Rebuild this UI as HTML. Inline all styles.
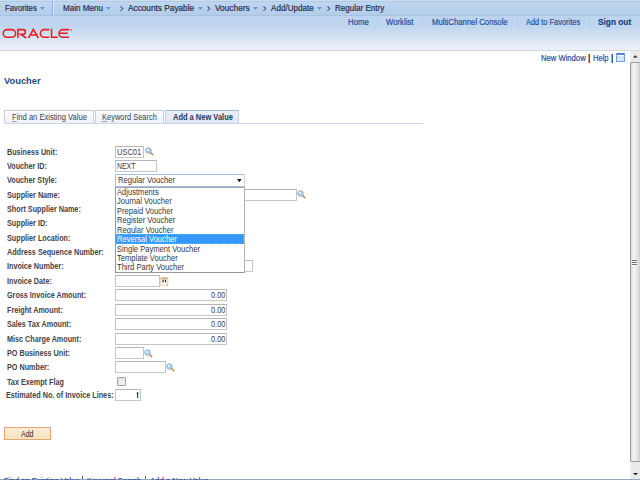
<!DOCTYPE html>
<html><head><meta charset="utf-8"><style>
html,body{margin:0;padding:0;}
body{width:640px;height:480px;overflow:hidden;position:relative;background:#fff;font-family:"Liberation Sans",sans-serif;}
.t{position:absolute;white-space:nowrap;}
.b{position:absolute;}
.tab{box-sizing:border-box;border:1px solid #c5cfdc;border-bottom:none;background:linear-gradient(#fdfdfd,#eef1f5);}
.tab.sel{border-color:#c4d2e4;border-top-color:#a6b6cc;background:linear-gradient(#eaf0f8,#dde6f2);}
u{text-decoration:underline;text-decoration-color:#9aa0b0;text-underline-offset:0.5px;}
</style></head><body>
<div class="b" style="left:0px;top:0px;width:640px;height:1px;background:#cddcec;"></div>
<div class="b" style="left:0px;top:1px;width:640px;height:1px;background:#b2cae6;"></div>
<div class="b" style="left:0px;top:2px;width:640px;height:13px;background:linear-gradient(#bed7f0,#b9d2ee 40%,#b3cce8);"></div>
<div class="b" style="left:0px;top:15px;width:640px;height:1px;background:#a9c2e0;"></div>
<div class="b" style="left:0px;top:16px;width:640px;height:34px;background:linear-gradient(#bdd4ee 0px,#c0d6ef 11px,#cadcf0 16px,#d6e4f4 22px,#e2ebf6 28px,#edf2f9 34px);"></div>
<div class="b" style="left:0px;top:50px;width:640px;height:1px;background:#d4d9e0;"></div>
<div class="b" style="left:52px;top:1px;width:1px;height:15px;background:#8eb0dc;"></div>
<div class="b" style="left:53px;top:1px;width:1px;height:15px;background:#dfe9f5;"></div>
<div class="t" style="left:4.90px;top:5px;font-size:8.2px;line-height:8.2px;color:#232c48;-webkit-text-stroke:0.18px currentColor;transform:scaleX(0.9441);transform-origin:0 0;">Favorites</div>
<svg class="b" style="left:39.7px;top:7px" width="6" height="4"><path d="M0 0H4.8L2.4 3Z" fill="#7094c8"/></svg>
<div class="t" style="left:63.40px;top:5px;font-size:8.2px;line-height:8.2px;color:#232c48;-webkit-text-stroke:0.18px currentColor;transform:scaleX(0.9900);transform-origin:0 0;">Main Menu</div>
<svg class="b" style="left:105.7px;top:7px" width="6" height="4"><path d="M0 0H4.8L2.4 3Z" fill="#7094c8"/></svg>
<svg class="b" style="left:120px;top:5.8px" width="4" height="6"><path d="M0.5 0.3L2.8 2.6L0.5 4.9" fill="none" stroke="#4a5c8a" stroke-width="1.05"/></svg>
<div class="t" style="left:127.50px;top:5px;font-size:8.2px;line-height:8.2px;color:#232c48;-webkit-text-stroke:0.18px currentColor;transform:scaleX(1.0092);transform-origin:0 0;">Accounts Payable</div>
<svg class="b" style="left:197.8px;top:7px" width="6" height="4"><path d="M0 0H4.8L2.4 3Z" fill="#7094c8"/></svg>
<svg class="b" style="left:206.8px;top:5.8px" width="4" height="6"><path d="M0.5 0.3L2.8 2.6L0.5 4.9" fill="none" stroke="#4a5c8a" stroke-width="1.05"/></svg>
<div class="t" style="left:214.70px;top:5px;font-size:8.2px;line-height:8.2px;color:#232c48;-webkit-text-stroke:0.18px currentColor;transform:scaleX(1.0162);transform-origin:0 0;">Vouchers</div>
<svg class="b" style="left:253px;top:7px" width="6" height="4"><path d="M0 0H4.8L2.4 3Z" fill="#7094c8"/></svg>
<svg class="b" style="left:263px;top:5.8px" width="4" height="6"><path d="M0.5 0.3L2.8 2.6L0.5 4.9" fill="none" stroke="#4a5c8a" stroke-width="1.05"/></svg>
<div class="t" style="left:270.50px;top:5px;font-size:8.2px;line-height:8.2px;color:#232c48;-webkit-text-stroke:0.18px currentColor;transform:scaleX(0.9884);transform-origin:0 0;">Add/Update</div>
<svg class="b" style="left:317px;top:7px" width="6" height="4"><path d="M0 0H4.8L2.4 3Z" fill="#7094c8"/></svg>
<svg class="b" style="left:326.8px;top:5.8px" width="4" height="6"><path d="M0.5 0.3L2.8 2.6L0.5 4.9" fill="none" stroke="#4a5c8a" stroke-width="1.05"/></svg>
<div class="t" style="left:334.50px;top:5px;font-size:8.2px;line-height:8.2px;color:#232c48;-webkit-text-stroke:0.18px currentColor;transform:scaleX(0.9850);transform-origin:0 0;">Regular Entry</div>
<div class="t" style="left:347.50px;top:18px;font-size:8.3px;line-height:8.3px;color:#1f4c9e;-webkit-text-stroke:0.18px currentColor;transform:scaleX(0.9432);transform-origin:0 0;">Home</div>
<div class="b" style="left:377px;top:18px;width:1px;height:8px;background:#b5c9e2;"></div>
<div class="t" style="left:386.25px;top:18px;font-size:8.3px;line-height:8.3px;color:#1f4c9e;-webkit-text-stroke:0.18px currentColor;transform:scaleX(0.9333);transform-origin:0 0;">Worklist</div>
<div class="b" style="left:422px;top:18px;width:1px;height:8px;background:#b5c9e2;"></div>
<div class="t" style="left:432.00px;top:18px;font-size:8.3px;line-height:8.3px;color:#1f4c9e;-webkit-text-stroke:0.18px currentColor;transform:scaleX(0.9321);transform-origin:0 0;">MultiChannel Console</div>
<div class="b" style="left:517px;top:18px;width:1px;height:8px;background:#b5c9e2;"></div>
<div class="t" style="left:525.75px;top:18px;font-size:8.3px;line-height:8.3px;color:#1f4c9e;-webkit-text-stroke:0.18px currentColor;transform:scaleX(0.8958);transform-origin:0 0;">Add to Favorites</div>
<div class="b" style="left:589px;top:18px;width:1px;height:8px;background:#b5c9e2;"></div>
<div class="t" style="left:597.50px;top:18px;font-size:8.6px;line-height:8.6px;color:#1a3c80;font-weight:bold;transform:scaleX(0.9643);transform-origin:0 0;-webkit-text-stroke:0.15px currentColor;">Sign out</div>
<svg class="b" style="left:0;top:26px" width="76" height="14" viewBox="0 0 76 14">
<g fill="none" stroke="#ec1c24" stroke-width="1.55">
<rect x="3.2" y="3.6" width="12.4" height="7.6" rx="3.8"/>
<path d="M17.9 12V3.6H23.1A2.3 2.3 0 0 1 23.1 8.2H20.6L26.2 12"/>
<path d="M28.5 12L33.4 3.3L38.3 12M31.3 8.9H35.9"/>
<path d="M49.3 3.6H44.2A3.8 3.8 0 0 0 44.2 11.2H49.3"/>
<path d="M51.55 2.8V11.2H57.8"/>
<path d="M69 3.6H62.8A3.8 3.8 0 0 0 62.8 11.2H69M59.4 7.3H67.9"/>
</g>
<circle cx="71" cy="4.1" r="0.75" fill="#ec1c24"/>
</svg>
<div class="b" style="left:630px;top:51px;width:10px;height:428px;background:#eaeaea;"></div>
<div class="b" style="left:630px;top:51px;width:1px;height:428px;background:#f4f4f4;"></div>
<svg class="b" style="left:632.6px;top:55.2px" width="6" height="4"><path d="M0 2.6H4.6L2.3 0.2Z" fill="#222"/></svg>
<div class="b" style="left:630px;top:62px;width:10px;height:400px;box-sizing:border-box;border:1px solid #9c9c9c;border-right:none;border-radius:2px 0 0 2px;background:linear-gradient(90deg,#d8d8d8,#f6f6f6 30%,#e4e4e4 70%,#cfcfcf);"></div>
<div class="b" style="left:632px;top:260px;width:5px;height:1px;background:#707070;"></div>
<div class="b" style="left:632px;top:261px;width:5px;height:1px;background:#fafafa;"></div>
<div class="b" style="left:632px;top:262px;width:5px;height:1px;background:#707070;"></div>
<div class="b" style="left:632px;top:263px;width:5px;height:1px;background:#fafafa;"></div>
<div class="b" style="left:632px;top:264px;width:5px;height:1px;background:#707070;"></div>
<div class="b" style="left:632px;top:265px;width:5px;height:1px;background:#fafafa;"></div>
<svg class="b" style="left:632.8px;top:472.8px" width="6" height="3"><path d="M0 0H5L2.5 2.2Z" fill="#1a1a1a"/></svg>
<div class="b" style="left:0px;top:479px;width:640px;height:1px;background:#98a8bc;"></div>
<div class="t" style="left:540.60px;top:54px;font-size:8.3px;line-height:8.3px;color:#1f4c9e;-webkit-text-stroke:0.18px currentColor;transform:scaleX(0.9224);transform-origin:0 0;">New Window</div>
<div class="b" style="left:588px;top:54px;width:1px;height:9px;background:#d9a25a;"></div>
<div class="b" style="left:589px;top:54px;width:1px;height:9px;background:#3a58a0;"></div>
<div class="t" style="left:592.70px;top:54px;font-size:8.3px;line-height:8.3px;color:#1f4c9e;-webkit-text-stroke:0.18px currentColor;transform:scaleX(0.9118);transform-origin:0 0;">Help</div>
<div class="b" style="left:611px;top:54px;width:1px;height:9px;background:#d9a25a;"></div>
<div class="b" style="left:612px;top:54px;width:1px;height:9px;background:#3a58a0;"></div>
<div class="b" style="left:616px;top:53px;width:9px;height:9px;box-sizing:border-box;border:1px solid #6a9ee6;border-top-color:#4a80dc;background:linear-gradient(#c4d8f4,#dce8f8);"></div>
<div class="b" style="left:617px;top:54px;width:7px;height:1px;background:#5a8ee2;"></div>
<div class="b" style="left:617px;top:55px;width:7px;height:1px;background:#ffffff;"></div>
<div class="b" style="left:619px;top:56px;width:1px;height:5px;background:#e4eefb;"></div>
<div class="b" style="left:621px;top:56px;width:1px;height:5px;background:#e4eefb;"></div>
<div class="t" style="left:3.75px;top:76px;font-size:9.8px;line-height:9.8px;color:#2a4886;font-weight:bold;transform:scaleX(0.9500);transform-origin:0 0;">Voucher</div>
<div class="b" style="left:4px;top:123px;width:419px;height:1px;background:#c9d8ec;"></div>
<div class="b tab" style="left:4px;top:110px;width:90px;height:13px;"></div>
<div class="t" style="left:11.70px;top:113px;font-size:8.3px;line-height:8.3px;color:#3e4256;transform:scaleX(0.9146);transform-origin:0 0;"><u>F</u>ind an Existing Value</div>
<div class="b tab" style="left:95px;top:110px;width:69px;height:13px;"></div>
<div class="t" style="left:102.00px;top:113px;font-size:8.3px;line-height:8.3px;color:#3e4256;transform:scaleX(0.9016);transform-origin:0 0;"><u>K</u>eyword Search</div>
<div class="b tab sel" style="left:165px;top:110px;width:74px;height:13px;"></div>
<div class="t" style="left:172.50px;top:113px;font-size:8.3px;line-height:8.3px;color:#2a3a5c;font-weight:bold;transform:scaleX(0.9015);transform-origin:0 0;">Add a New Value</div>
<div class="t" style="left:6.60px;top:148px;font-size:8.3px;line-height:8.3px;color:#444448;font-weight:bold;transform:scaleX(0.8655);transform-origin:0 0;">Business Unit:</div>
<div class="t" style="left:6.60px;top:162px;font-size:8.3px;line-height:8.3px;color:#444448;font-weight:bold;transform:scaleX(0.8698);transform-origin:0 0;">Voucher ID:</div>
<div class="t" style="left:6.60px;top:176px;font-size:8.3px;line-height:8.3px;color:#444448;font-weight:bold;transform:scaleX(0.8698);transform-origin:0 0;">Voucher Style:</div>
<div class="t" style="left:6.60px;top:191px;font-size:8.3px;line-height:8.3px;color:#444448;font-weight:bold;transform:scaleX(0.8698);transform-origin:0 0;">Supplier Name:</div>
<div class="t" style="left:6.60px;top:205px;font-size:8.3px;line-height:8.3px;color:#444448;font-weight:bold;transform:scaleX(0.8698);transform-origin:0 0;">Short Supplier Name:</div>
<div class="t" style="left:6.60px;top:219px;font-size:8.3px;line-height:8.3px;color:#444448;font-weight:bold;transform:scaleX(0.8698);transform-origin:0 0;">Supplier ID:</div>
<div class="t" style="left:6.60px;top:234px;font-size:8.3px;line-height:8.3px;color:#444448;font-weight:bold;transform:scaleX(0.8698);transform-origin:0 0;">Supplier Location:</div>
<div class="t" style="left:6.60px;top:248px;font-size:8.3px;line-height:8.3px;color:#444448;font-weight:bold;transform:scaleX(0.8698);transform-origin:0 0;">Address Sequence Number:</div>
<div class="t" style="left:6.60px;top:262px;font-size:8.3px;line-height:8.3px;color:#444448;font-weight:bold;transform:scaleX(0.8698);transform-origin:0 0;">Invoice Number:</div>
<div class="t" style="left:6.60px;top:277px;font-size:8.3px;line-height:8.3px;color:#444448;font-weight:bold;transform:scaleX(0.8698);transform-origin:0 0;">Invoice Date:</div>
<div class="t" style="left:6.60px;top:291px;font-size:8.3px;line-height:8.3px;color:#444448;font-weight:bold;transform:scaleX(0.8698);transform-origin:0 0;">Gross Invoice Amount:</div>
<div class="t" style="left:6.60px;top:306px;font-size:8.3px;line-height:8.3px;color:#444448;font-weight:bold;transform:scaleX(0.8698);transform-origin:0 0;">Freight Amount:</div>
<div class="t" style="left:6.60px;top:320px;font-size:8.3px;line-height:8.3px;color:#444448;font-weight:bold;transform:scaleX(0.8698);transform-origin:0 0;">Sales Tax Amount:</div>
<div class="t" style="left:6.60px;top:335px;font-size:8.3px;line-height:8.3px;color:#444448;font-weight:bold;transform:scaleX(0.8698);transform-origin:0 0;">Misc Charge Amount:</div>
<div class="t" style="left:6.60px;top:349px;font-size:8.3px;line-height:8.3px;color:#444448;font-weight:bold;transform:scaleX(0.8698);transform-origin:0 0;">PO Business Unit:</div>
<div class="t" style="left:6.60px;top:363px;font-size:8.3px;line-height:8.3px;color:#444448;font-weight:bold;transform:scaleX(0.8698);transform-origin:0 0;">PO Number:</div>
<div class="t" style="left:6.60px;top:378px;font-size:8.3px;line-height:8.3px;color:#444448;font-weight:bold;transform:scaleX(0.8698);transform-origin:0 0;">Tax Exempt Flag</div>
<div class="t" style="left:6.25px;top:391px;font-size:8.3px;line-height:8.3px;color:#444448;font-weight:bold;transform:scaleX(0.8740);transform-origin:0 0;">Estimated No. of Invoice Lines:</div>
<div class="b" style="left:115px;top:145.5px;width:29px;height:12px;box-sizing:border-box;border:1px solid #c4c4c4;border-top-color:#b6b6b6;border-bottom-color:#c8c8c8;background:#fff;"></div>
<div class="t" style="left:116.60px;top:148px;font-size:8.3px;line-height:8.3px;color:#3c3c48;transform:scaleX(0.9037);transform-origin:0 0;">USC01</div>
<svg class="b" style="left:144.5px;top:146.5px" width="10" height="10" viewBox="0 0 10 10">
<path d="M5.4 5.4L7.8 7.8" stroke="#cc8844" stroke-width="1.5" stroke-linecap="round"/>
<circle cx="3.5" cy="3.5" r="2.8" fill="#a9d2f2" stroke="#8ca4bc" stroke-width="0.8"/>
<circle cx="2.9" cy="2.9" r="1.1" fill="#e8f5ff"/>
</svg>
<div class="b" style="left:115px;top:160px;width:42px;height:12px;box-sizing:border-box;border:1px solid #c4c4c4;border-top-color:#b6b6b6;border-bottom-color:#c8c8c8;background:#fff;"></div>
<div class="t" style="left:116.90px;top:162px;font-size:8.3px;line-height:8.3px;color:#3c3c48;transform:scaleX(0.8341);transform-origin:0 0;">NEXT</div>
<div class="b" style="left:115px;top:188.7px;width:182px;height:12px;box-sizing:border-box;border:1px solid #c4c4c4;border-top-color:#b6b6b6;border-bottom-color:#c8c8c8;background:#fff;"></div>
<svg class="b" style="left:297px;top:190px" width="10" height="10" viewBox="0 0 10 10">
<path d="M5.4 5.4L7.8 7.8" stroke="#cc8844" stroke-width="1.5" stroke-linecap="round"/>
<circle cx="3.5" cy="3.5" r="2.8" fill="#a9d2f2" stroke="#8ca4bc" stroke-width="0.8"/>
<circle cx="2.9" cy="2.9" r="1.1" fill="#e8f5ff"/>
</svg>
<div class="b" style="left:115px;top:260px;width:138px;height:11.5px;box-sizing:border-box;border:1px solid #c4c4c4;border-top-color:#b6b6b6;border-bottom-color:#c8c8c8;background:#fff;"></div>
<div class="b" style="left:115px;top:275px;width:45px;height:12px;box-sizing:border-box;border:1px solid #c4c4c4;border-top-color:#b6b6b6;border-bottom-color:#c8c8c8;background:#fff;"></div>
<svg class="b" style="left:160px;top:277px" width="9" height="9" viewBox="0 0 9 9">
<defs><linearGradient id="cg" x1="0" y1="0" x2="0" y2="1"><stop offset="0" stop-color="#f0d8b0"/><stop offset="0.45" stop-color="#f6ead6"/><stop offset="1" stop-color="#ffffff"/></linearGradient></defs>
<rect x="0.7" y="0.5" width="7.2" height="8.2" rx="0.8" fill="url(#cg)" stroke="#d9c3a3" stroke-width="0.7"/>
<path d="M1.5 1.3H7.2" stroke="#e4a860" stroke-width="1"/>
<path d="M3.1 2.8V5.2M5.5 2.8V5.2" stroke="#2e2838" stroke-width="1.1"/>
<path d="M6.3 8.6L7.9 7V8.6Z" fill="#b07850"/>
</svg>
<div class="b" style="left:115px;top:289.3px;width:112px;height:12px;box-sizing:border-box;border:1px solid #c4c4c4;border-top-color:#b6b6b6;border-bottom-color:#c8c8c8;background:#fff;"></div>
<div class="t" style="left:211.00px;top:291px;font-size:8.3px;line-height:8.3px;color:#3c3c48;transform:scaleX(0.8875);transform-origin:0 0;">0.00</div>
<div class="b" style="left:115px;top:303.9px;width:112px;height:12px;box-sizing:border-box;border:1px solid #c4c4c4;border-top-color:#b6b6b6;border-bottom-color:#c8c8c8;background:#fff;"></div>
<div class="t" style="left:211.00px;top:306px;font-size:8.3px;line-height:8.3px;color:#3c3c48;transform:scaleX(0.8875);transform-origin:0 0;">0.00</div>
<div class="b" style="left:115px;top:318.2px;width:112px;height:12px;box-sizing:border-box;border:1px solid #c4c4c4;border-top-color:#b6b6b6;border-bottom-color:#c8c8c8;background:#fff;"></div>
<div class="t" style="left:211.00px;top:320px;font-size:8.3px;line-height:8.3px;color:#3c3c48;transform:scaleX(0.8875);transform-origin:0 0;">0.00</div>
<div class="b" style="left:115px;top:332.6px;width:112px;height:12px;box-sizing:border-box;border:1px solid #c4c4c4;border-top-color:#b6b6b6;border-bottom-color:#c8c8c8;background:#fff;"></div>
<div class="t" style="left:211.00px;top:335px;font-size:8.3px;line-height:8.3px;color:#3c3c48;transform:scaleX(0.8875);transform-origin:0 0;">0.00</div>
<div class="b" style="left:115px;top:347px;width:29px;height:12px;box-sizing:border-box;border:1px solid #c4c4c4;border-top-color:#b6b6b6;border-bottom-color:#c8c8c8;background:#fff;"></div>
<svg class="b" style="left:144.3px;top:348.5px" width="10" height="10" viewBox="0 0 10 10">
<path d="M5.4 5.4L7.8 7.8" stroke="#cc8844" stroke-width="1.5" stroke-linecap="round"/>
<circle cx="3.5" cy="3.5" r="2.8" fill="#a9d2f2" stroke="#8ca4bc" stroke-width="0.8"/>
<circle cx="2.9" cy="2.9" r="1.1" fill="#e8f5ff"/>
</svg>
<div class="b" style="left:115px;top:361px;width:51px;height:12px;box-sizing:border-box;border:1px solid #c4c4c4;border-top-color:#b6b6b6;border-bottom-color:#c8c8c8;background:#fff;"></div>
<svg class="b" style="left:166px;top:362.5px" width="10" height="10" viewBox="0 0 10 10">
<path d="M5.4 5.4L7.8 7.8" stroke="#cc8844" stroke-width="1.5" stroke-linecap="round"/>
<circle cx="3.5" cy="3.5" r="2.8" fill="#a9d2f2" stroke="#8ca4bc" stroke-width="0.8"/>
<circle cx="2.9" cy="2.9" r="1.1" fill="#e8f5ff"/>
</svg>
<div class="b" style="left:117px;top:377.3px;width:9px;height:9px;box-sizing:border-box;border:1px solid #a2a2a2;border-radius:1px;background:linear-gradient(135deg,#dcdfe4,#f6f6f6);"></div>
<div class="b" style="left:115px;top:389.3px;width:26px;height:12px;box-sizing:border-box;border:1px solid #c4c4c4;border-top-color:#b6b6b6;border-bottom-color:#c8c8c8;background:#fff;"></div>
<div class="b" style="left:137px;top:392px;width:1px;height:6px;background:#4a3c48;"></div>
<div class="b" style="left:136px;top:393px;width:1px;height:1px;background:#d8b8a0;"></div>
<div class="b" style="left:138px;top:392px;width:0.5px;height:6px;background:#b8e0f8;"></div>
<div class="b" style="left:115px;top:174px;width:130px;height:13px;box-sizing:border-box;border:1px solid #a4c0e6;border-right-color:#c4d8f0;background:#fff;"></div>
<div class="t" style="left:118.30px;top:176px;font-size:8.3px;line-height:8.3px;color:#363640;transform:scaleX(0.9242);transform-origin:0 0;">Regular Voucher</div>
<svg class="b" style="left:236.8px;top:178.8px" width="5" height="4"><path d="M0 0H4.6L2.3 3.2Z" fill="#1a1010"/></svg>
<div class="b" style="left:115px;top:187px;width:130px;height:86px;box-sizing:border-box;border:1px solid #94989e;border-top-color:#a4a8ae;border-right-color:#b4b8be;background:#fff;"></div>
<div class="t" style="left:117.10px;top:188px;font-size:8.3px;line-height:8.3px;color:#363640;transform:scaleX(0.9137);transform-origin:0 0;">Adjustments</div>
<div class="t" style="left:117.10px;top:197px;font-size:8.3px;line-height:8.3px;color:#363640;transform:scaleX(0.9137);transform-origin:0 0;">Journal Voucher</div>
<div class="t" style="left:117.10px;top:207px;font-size:8.3px;line-height:8.3px;color:#363640;transform:scaleX(0.9137);transform-origin:0 0;">Prepaid Voucher</div>
<div class="t" style="left:117.10px;top:216px;font-size:8.3px;line-height:8.3px;color:#363640;transform:scaleX(0.9137);transform-origin:0 0;">Register Voucher</div>
<div class="t" style="left:117.10px;top:226px;font-size:8.3px;line-height:8.3px;color:#363640;transform:scaleX(0.9137);transform-origin:0 0;">Regular Voucher</div>
<div class="b" style="left:116px;top:234px;width:128px;height:10px;box-sizing:border-box;background:#3399ff;border:1px dotted #b8a088;border-left-color:#3399ff;"></div>
<div class="t" style="left:117.10px;top:235px;font-size:8.3px;line-height:8.3px;color:#ffffff;transform:scaleX(0.9137);transform-origin:0 0;">Reversal Voucher</div>
<div class="t" style="left:117.10px;top:245px;font-size:8.3px;line-height:8.3px;color:#363640;transform:scaleX(0.9137);transform-origin:0 0;">Single Payment Voucher</div>
<div class="t" style="left:117.10px;top:254px;font-size:8.3px;line-height:8.3px;color:#363640;transform:scaleX(0.9137);transform-origin:0 0;">Template Voucher</div>
<div class="t" style="left:117.10px;top:263px;font-size:8.3px;line-height:8.3px;color:#363640;transform:scaleX(0.9137);transform-origin:0 0;">Third Party Voucher</div>
<div class="b" style="left:4.2px;top:427px;width:46.4px;height:12.7px;box-sizing:border-box;border:1px solid #e2a878;background:linear-gradient(#fcecd6,#f8e2bf);"></div>
<div class="t" style="left:21.10px;top:430px;font-size:8.3px;line-height:8.3px;color:#262626;transform:scaleX(0.8400);transform-origin:0 0;">Add</div>
<div class="t" style="left:3.90px;top:477px;font-size:8.3px;line-height:8.3px;color:#1f4c9e;-webkit-text-stroke:0.18px currentColor;transform:scaleX(0.9244);transform-origin:0 0;">Find an Existing Value</div>
<div class="b" style="left:82px;top:476px;width:1px;height:3px;background:#6a5a50;"></div>
<div class="t" style="left:86.90px;top:477px;font-size:8.3px;line-height:8.3px;color:#1f4c9e;-webkit-text-stroke:0.18px currentColor;transform:scaleX(0.8885);transform-origin:0 0;">Keyword Search</div>
<div class="b" style="left:145px;top:476px;width:1px;height:3px;background:#6a5a50;"></div>
<div class="t" style="left:150.30px;top:477px;font-size:8.3px;line-height:8.3px;color:#1f4c9e;-webkit-text-stroke:0.18px currentColor;transform:scaleX(0.9244);transform-origin:0 0;">Add a New Value</div>
</body></html>
